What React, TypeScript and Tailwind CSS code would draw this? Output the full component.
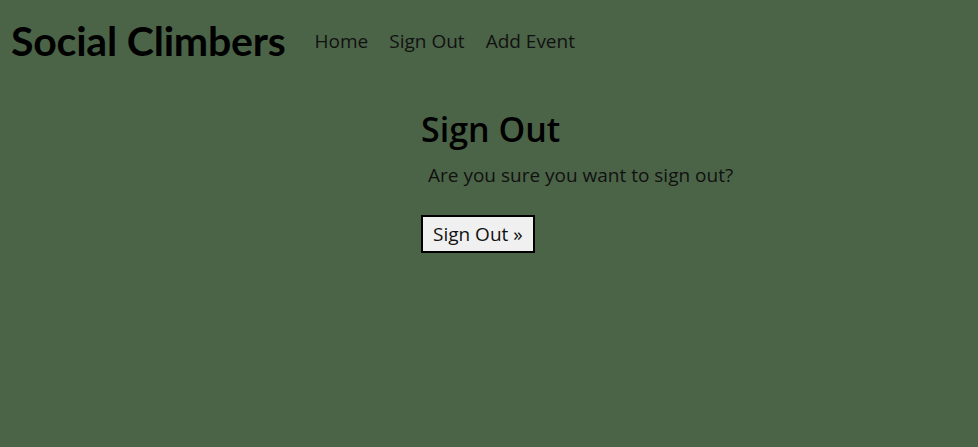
export default function App() {
  return (
    <div className="min-h-[447px] w-full bg-[#4b6447] text-[#0b0b0b] font-['Open_Sans',sans-serif]">
      <header className="flex items-center pl-[11px] pt-[16px]">
        <h1 className="font-['Lato',sans-serif] text-[41px] font-bold leading-[50px] tracking-[-0.2px] text-black">
          Social Climbers
        </h1>
        <nav className="ml-[29px] flex gap-[21px] pt-[1px] text-[19px] text-[#111]">
          <a href="#">Home</a>
          <a href="#">Sign Out</a>
          <a href="#">Add Event</a>
        </nav>
      </header>

      <main className="ml-[421px] mt-[42px]">
        <h2 className="text-[34px] font-semibold leading-[42px] text-black">Sign Out</h2>
        <p className="mt-[12px] pl-[7px] text-[19px] leading-[26px] text-[#111]">
          Are you sure you want to sign out?
        </p>
        <button className="mt-[27px] border-2 border-black bg-[#f0f0f0] px-[10px] py-[2px] text-[19px] leading-[30px] text-[#111]">
          Sign Out »
        </button>
      </main>
    </div>
  );
}
